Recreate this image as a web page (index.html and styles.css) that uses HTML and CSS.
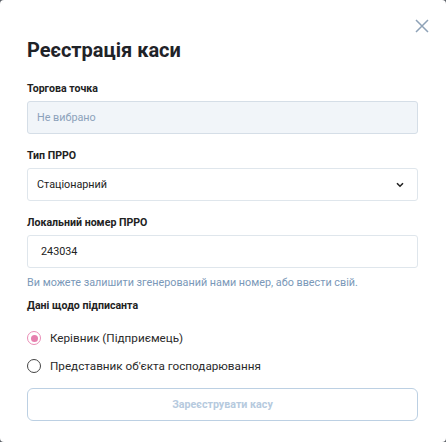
FILE: index.html
```html
<!DOCTYPE html>
<html lang="uk">
<head>
<meta charset="utf-8">
<link rel="stylesheet" href="styles.css">
</head>
<body>
<div class="modal">
  <button class="close" aria-label="Закрити">
    <svg width="14" height="14" viewBox="0 0 14 14"><path d="M1 1L13 13M13 1L1 13" stroke="#8ea2b7" stroke-width="1.5" fill="none"/></svg>
  </button>
  <h1 class="title">Реєстрація каси</h1>

  <div class="field">
    <div class="label">Торгова точка</div>
    <div class="input disabled">Не вибрано</div>
  </div>

  <div class="field">
    <div class="label">Тип ПРРО</div>
    <div class="input select">
      <span>Стаціонарний</span>
      <svg width="8" height="6" viewBox="0 0 8 6"><path d="M1 1.2L4 4.2L7 1.2" stroke="#222" stroke-width="1.6" fill="none"/></svg>
    </div>
  </div>

  <div class="field">
    <div class="label">Локальний номер ПРРО</div>
    <div class="input number">243034</div>
    <div class="help">Ви можете залишити згенерований нами номер, або ввести свій.</div>
  </div>

  <div class="label signer">Дані щодо підписанта</div>
  <div class="radios">
    <div class="radio-row"><span class="radio checked"></span>Керівник (Підприємець)</div>
    <div class="radio-row"><span class="radio"></span>Представник об'єкта господарювання</div>
  </div>

  <button class="submit">Зареєструвати касу</button>
</div>
</body>
</html>
```

FILE: styles.css
```css
html, body {
  margin: 0;
  padding: 0;
  background: #5a5f66;
}
body {
  font-family: Roboto, "Noto Sans", sans-serif;
  color: #222;
}
.modal {
  position: relative;
  box-sizing: border-box;
  width: 446px;
  height: 442px;
  background: #fff;
  border-radius: 4px;
  padding: 38px 28px 0 27px;
}
.close {
  position: absolute;
  top: 19px;
  right: 17px;
  width: 14px;
  height: 14px;
  padding: 0;
  border: 0;
  background: none;
  display: flex;
}
.title {
  margin: 0;
  font-size: 20px;
  line-height: 24px;
  font-weight: 700;
  color: #1f2328;
}
.field {
  display: flex;
  flex-direction: column;
}
.field:first-of-type { margin-top: 21px; }
.field + .field { margin-top: 16px; }
.label {
  font-size: 10.6px;
  line-height: 12px;
  font-weight: 700;
  color: #222;
  margin-bottom: 6px;
}
.input {
  box-sizing: border-box;
  height: 33px;
  border: 1px solid #dfe6ec;
  border-radius: 3px;
  padding: 0 9px;
  display: flex;
  align-items: center;
  font-size: 10.8px;
  color: #222;
}
.input.number {
  padding-left: 13px;
}
.input.disabled {
  background: #f1f5f9;
  border-color: #d5dee7;
  color: #8ca2bb;
}
.input.select {
  justify-content: space-between;
  padding-right: 13px;
}
.help {
  margin-top: 9px;
  font-size: 10.8px;
  line-height: 12px;
  color: #7a98b8;
}
.signer {
  margin-top: 11px;
  margin-bottom: 0;
}
.radios {
  margin-top: 16px;
  display: flex;
  flex-direction: column;
  gap: 8px;
}
.radio-row {
  display: flex;
  align-items: center;
  height: 20px;
  font-size: 11.7px;
  color: #2a2a2a;
}
.radio {
  box-sizing: border-box;
  width: 14px;
  height: 14px;
  border-radius: 50%;
  border: 1.5px solid #444;
  margin-right: 9px;
  display: flex;
  align-items: center;
  justify-content: center;
}
.radio.checked {
  border-color: #ea8db6;
}
.radio.checked::after {
  content: "";
  width: 7px;
  height: 7px;
  border-radius: 50%;
  background: #e67fae;
}
.submit {
  margin-top: 12px;
  width: 100%;
  height: 33px;
  border: 1px solid #bcd0e3;
  border-radius: 6px;
  background: #fff;
  font-family: inherit;
  font-size: 10.7px;
  font-weight: 700;
  color: #b6cade;
}
```
